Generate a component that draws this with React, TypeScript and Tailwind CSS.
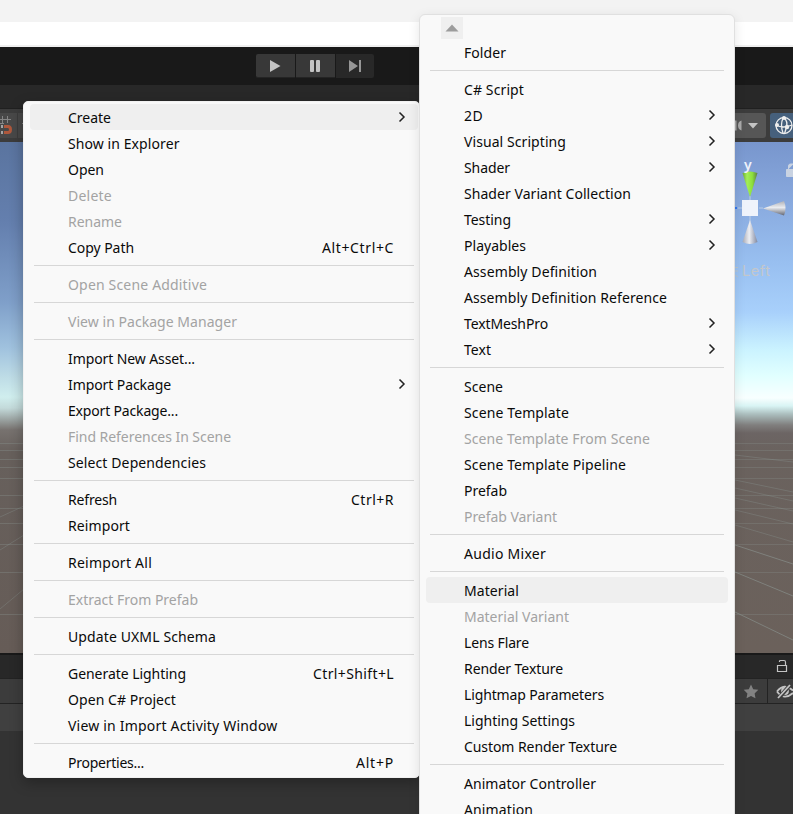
import React from 'react';

type Entry = { t: string; w: number; off?: boolean; sub?: boolean; key?: string; kw?: number; hot?: boolean } | null;

const left: Entry[] = [
  { t: 'Create', w: 43, sub: true, hot: true }, { t: 'Show in Explorer', w: 111.5 }, { t: 'Open', w: 36 },
  { t: 'Delete', w: 44, off: true }, { t: 'Rename', w: 54, off: true }, { t: 'Copy Path', w: 66, key: 'Alt+Ctrl+C', kw: 72 }, null,
  { t: 'Open Scene Additive', w: 139, off: true }, null,
  { t: 'View in Package Manager', w: 169, off: true }, null,
  { t: 'Import New Asset...', w: 127 }, { t: 'Import Package', w: 103, sub: true }, { t: 'Export Package...', w: 110 },
  { t: 'Find References In Scene', w: 163, off: true }, { t: 'Select Dependencies', w: 138 }, null,
  { t: 'Refresh', w: 49, key: 'Ctrl+R', kw: 43 }, { t: 'Reimport', w: 62 }, null,
  { t: 'Reimport All', w: 84 }, null,
  { t: 'Extract From Prefab', w: 130, off: true }, null,
  { t: 'Update UXML Schema', w: 148 }, null,
  { t: 'Generate Lighting', w: 118, key: 'Ctrl+Shift+L', kw: 81 }, { t: 'Open C# Project', w: 108 }, { t: 'View in Import Activity Window', w: 209.5 }, null,
  { t: 'Properties...', w: 76, key: 'Alt+P', kw: 38 },
];

const right: Entry[] = [
  { t: 'Folder', w: 42 }, null,
  { t: 'C# Script', w: 60 }, { t: '2D', w: 19, sub: true }, { t: 'Visual Scripting', w: 102, sub: true }, { t: 'Shader', w: 46, sub: true },
  { t: 'Shader Variant Collection', w: 167 }, { t: 'Testing', w: 47, sub: true }, { t: 'Playables', w: 62, sub: true },
  { t: 'Assembly Definition', w: 133 }, { t: 'Assembly Definition Reference', w: 203 }, { t: 'TextMeshPro', w: 84, sub: true }, { t: 'Text', w: 27, sub: true }, null,
  { t: 'Scene', w: 39 }, { t: 'Scene Template', w: 105 }, { t: 'Scene Template From Scene', w: 186, off: true }, { t: 'Scene Template Pipeline', w: 162 },
  { t: 'Prefab', w: 43 }, { t: 'Prefab Variant', w: 93, off: true }, null,
  { t: 'Audio Mixer', w: 82 }, null,
  { t: 'Material', w: 55, hot: true }, { t: 'Material Variant', w: 105, off: true }, { t: 'Lens Flare', w: 65 }, { t: 'Render Texture', w: 99 },
  { t: 'Lightmap Parameters', w: 140 }, { t: 'Lighting Settings', w: 111 }, { t: 'Custom Render Texture', w: 153 }, null,
  { t: 'Animator Controller', w: 132 }, { t: 'Animation', w: 69 },
];

/* Spaces the letters so that the label spans the given advance. */
function Label({ text, width }: { text: string; width: number }) {
  const ref = React.useRef<HTMLSpanElement>(null);
  const [gap, setGap] = React.useState(0);
  React.useLayoutEffect(() => {
    const natural = ref.current!.getBoundingClientRect().width;
    setGap((width - natural) / text.length);
  }, [text, width]);
  return <span ref={ref} className="whitespace-pre pt-[2px]" style={{ letterSpacing: gap }}>{text}</span>;
}

function Rows({ items, side }: { items: Entry[]; side: 'l' | 'r' }) {
  const l = side === 'l';
  return (
    <div className="flex flex-col">
      {items.map((e, i) => e === null ? (
        <div key={i} className={`flex h-[11px] items-center ${l ? 'pl-[10px] pr-[5px]' : 'px-[10px]'}`}><div className="h-px w-full bg-[#d7d7d7]" /></div>
      ) : (
        <div key={i} className={`flex h-[26px] shrink-0 items-center rounded-[4px] ${l ? 'ml-[6px] mr-px pl-[38px]' : 'mx-[6px] pl-[38px]'} ${e.hot ? 'bg-[#efefef]' : ''} ${e.off ? 'text-[#a3a3a3]' : 'text-[#0a0a0a]'}`}>
          <Label text={e.t} width={e.w} />
          {e.key && <span className="ml-auto mr-[24px] flex"><Label text={e.key} width={e.kw!} /></span>}
          {e.sub && <svg className="ml-auto mr-[12px]" width="8" height="12" viewBox="0 0 8 12" fill="none" stroke="#222" strokeWidth="1.5"><path d="M1.5 1.500 6 6 1.500 10.500" /></svg>}
        </div>
      ))}
    </div>
  );
}

export default function App() {
  return (
    <div className="relative h-[814px] w-[793px] overflow-hidden bg-[#333] font-['Noto_Sans','Open_Sans',sans-serif] text-[14px] leading-none">
      <div className="flex h-full flex-col">
        <div className="h-[22px] shrink-0 bg-[#f3f3f3]" />
        <div className="h-[23px] shrink-0 bg-white" />
        <div className="h-[2px] shrink-0 bg-[#f0f0f0]" />
        <div className="flex h-[38px] shrink-0 items-start gap-px bg-[#191919] pl-[256px] pt-[7px]">
          <div className="flex h-[24px] w-[39px] items-center justify-center rounded-l-[2px] border-b border-[#242424] bg-[#383838]"><svg width="12" height="14" className="mr-px"><path d="M1 1v12L11.500 7z" fill="#c4c4c4" /></svg></div>
          <div className="flex h-[24px] w-[39px] items-center justify-center gap-[2px] border-b border-[#242424] bg-[#383838] pr-[2px]"><div className="h-[12px] w-[4px] rounded-[1px] bg-[#c4c4c4]" /><div className="h-[12px] w-[4px] rounded-[1px] bg-[#c4c4c4]" /></div>
          <div className="flex h-[24px] w-[38px] items-center justify-center rounded-r-[2px] bg-[#282828] pr-px"><svg width="13" height="14"><path d="M1 1v12L10 7zM11 1h2v12h-2z" fill="#969696" /></svg></div>
        </div>
        <div className="h-[23px] shrink-0 bg-[#282828]" />
        <div className="h-px shrink-0 bg-[#202020]" />
        <div className="flex h-[33px] shrink-0 items-start bg-[#3c3c3c] pt-[4px]">
          <div className="h-[25px] w-[17px] bg-[#484848]">
            <svg width="17" height="25" fill="none"><path d="M0 6.500h11M0 10.500h4M2.500 3v8M7.500 3v7" stroke="#858585" /><path d="M4 13.500h4q2.500 0 2.500 3t-2.500 3H4" stroke="#ae583c" strokeWidth="3" /><path d="M1 12h2v3H1zM1 18h2v3H1z" fill="#a5a5a5" /></svg>
          </div>
          <div className="ml-px h-[25px] w-[20px] bg-[#484848]"><svg width="20" height="25"><path d="M4 10.500h6" stroke="#858585" /></svg></div>
          <div className="ml-auto flex h-[25px] w-[37px] items-center rounded-r-[3px] bg-[#565656]">
            <svg width="37" height="25"><path d="M12.500 7.500v10q-3.500-1-3.500-5t3.500-5zM6 7.500h1.500v10H6z" fill="#aaa" /><path d="M19 10h10l-5 5.500z" fill="#c4c4c4" /></svg>
          </div>
          <div className="ml-[4px] h-[25px] w-[23px] rounded-l-[3px] bg-[#46607c]">
            <svg width="23" height="25" fill="none" stroke="#eee" strokeWidth="1.300"><circle cx="14" cy="12.500" r="8" /><path d="M14 4.500q4 4 2.500 9.500t-2 6M13 5q-3 7 0 15M6 12q7 4 16 0" /><g fill="#eee" stroke="none"><circle cx="14" cy="5" r="2" /><circle cx="7" cy="12" r="2" /><circle cx="17" cy="14" r="2.200" /></g></svg>
          </div>
        </div>
        <div className="relative h-[511px] shrink-0 bg-[linear-gradient(to_bottom,#5a749f_0px,#647fae_80px,#7f9fc9_160px,#9fc1de_205px,#bedce6_235px,#d0eeee_255px,#c3dada_266px,#77726f_288px,#67605c_310px,#665c57_511px)]">
          <div className="absolute right-0 top-0 h-full w-[60px] bg-[linear-gradient(to_bottom,#7896cd_0px,#86a6db_50px,#98bff0_120px,#a8d0fb_170px,#cbf3ff_208px,#e0ffff_233px,#f8ffff_256px,#d8f4f4_264px,#acbfbf_272px,#807f7e_283px,#6c6564_291px,#6a625e_310px,#6b615b_511px)]" />
          <svg className="absolute inset-0" width="793" height="511">
            <g stroke="#8f9a98" strokeOpacity=".38" fill="none">
              <path d="M0 301.500h24M0 308.500h24M0 317.500h24M0 325.500h24M0 336.500h24M0 353.500h24M0 366.500h24M0 381.500h24M0 402.500h24M0 430.500h24M0 472.500h24M0 375l24-11M0 408l24-15M0 467l24-20" strokeOpacity=".3" />
              <path d="M735 301.500h58M735 308.500h58M735 317.500h58M735 325.500h58M735 336.500h58M735 353.500h58M735 366.500h58M735 381.500h58M735 402.500h58M735 430.500h58M735 472.500h58" strokeOpacity=".25" />
              <path d="M735 313l58 7M735 338l58 12M735 346l58 13M735 356l58 13M735 368l58 14M735 383l58 17" strokeOpacity=".3" />
              <path d="M735 403l58 19M735 430l58 24M735 470l58 28" strokeOpacity=".55" />
            </g>
            <path d="M735 66h2" stroke="#3477ed" strokeWidth="2" /><path d="M738 66h4M759 66h4M750 54v4M750 74v6" stroke="#b9cde7" />
            <defs><linearGradient id="g"><stop stopColor="#70ac32" /><stop offset=".3" stopColor="#a3ee58" /><stop offset=".65" stopColor="#8de03c" /><stop offset="1" stopColor="#5c7e44" /></linearGradient><linearGradient id="s"><stop stopColor="#a7a9b4" /><stop offset=".45" stopColor="#eceef3" /><stop offset="1" stopColor="#8088a0" /></linearGradient><linearGradient id="h" x2="0" y2="1"><stop stopColor="#afb1b8" /><stop offset=".45" stopColor="#e9ebef" /><stop offset="1" stopColor="#626673" /></linearGradient></defs>
            <path d="M742.500 31q7.500-3 15 0L750 55z" fill="url(#g)" /><path d="M742.500 100q7.500 4 15 0L750 78z" fill="url(#s)" /><path d="M763 66.500l21-7.500q3 7 0 14.500z" fill="url(#h)" />
            <path d="M742 58h16v16h-16z" fill="#eff3fb" />
            <path d="M786.500 27.500h7v7h-7zM788.500 27v-3q0-2 2-2h3" fill="#c9d3e2" stroke="#c9d3e2" />
            <text x="744" y="28" fill="#eef2fa" fontSize="14" fontWeight="600">y</text>
            <path d="M735 125.500h3M735 129h3M735 133l3 2" stroke="#b9c6cd" />
            <text x="742" y="134" fill="#c3c7cb" fontSize="14.500" fontFamily="Inter" textLength="28">Left</text>
          </svg>
        </div>
        <div className="h-[2px] shrink-0 bg-[#191919]" />
        <div className="flex h-[23px] shrink-0 justify-end bg-[#282828]"><svg width="20" height="23" fill="none" stroke="#c4c4c4" strokeWidth="1.200"><path d="M4.500 10.500h9v6h-9zM6.500 7V6q0-.500 1-.500h3.500q1.500 0 1.500 1.500v3.500" /></svg></div>
        <div className="flex h-[26px] shrink-0 justify-end border-y border-[#232323] bg-[#3c3c3c]">
          <div className="w-[32px] border-r border-[#232323]"><svg width="31" height="24"><path d="M15 5.500l2.200 4.700 5.100.600-3.700 3.600.9 4.900L15 16.900l-4.500 2.400.9-4.900-3.700-3.600 5.100-.600z" fill="#828282" /></svg></div>
          <div className="w-[25px]"><svg width="25" height="24" fill="none" stroke="#c4c4c4" strokeWidth="1.800"><path d="M9 12.500q7-9 16-1M25 14q-9 8-16-1.500" /><circle cx="17" cy="12" r="3" fill="#c4c4c4" /><path d="M11 19 22 6" stroke="#3c3c3c" strokeWidth="4" /><path d="M10 19 22 6" /></svg></div>
        </div>
        <div className="h-[27px] shrink-0 bg-[#404040]" />
      </div>

      <div className="absolute left-[23px] top-[101px] w-[397px] rounded-[5px] border border-[#f1f1f1] bg-[#f9f9f9] py-[2px] shadow-[0_5px_14px_rgba(0,0,0,0.28)]"><Rows items={left} side="l" /></div>
      <div className="absolute left-[419px] top-[14px] h-[820px] w-[316px] rounded-[6px] border border-[#e0e0e0] bg-[#f9f9f9] pt-[2px] shadow-[0_3px_12px_rgba(0,0,0,0.1)]">
        <div className="ml-[21px] flex h-[22px] w-[22px] items-center justify-center bg-[#efefef]"><svg width="14" height="8"><path d="M.5 7.500 7 .500l6.500 7z" fill="#9c9c9c" /></svg></div>
        <Rows items={right} side="r" />
      </div>
    </div>
  );
}
